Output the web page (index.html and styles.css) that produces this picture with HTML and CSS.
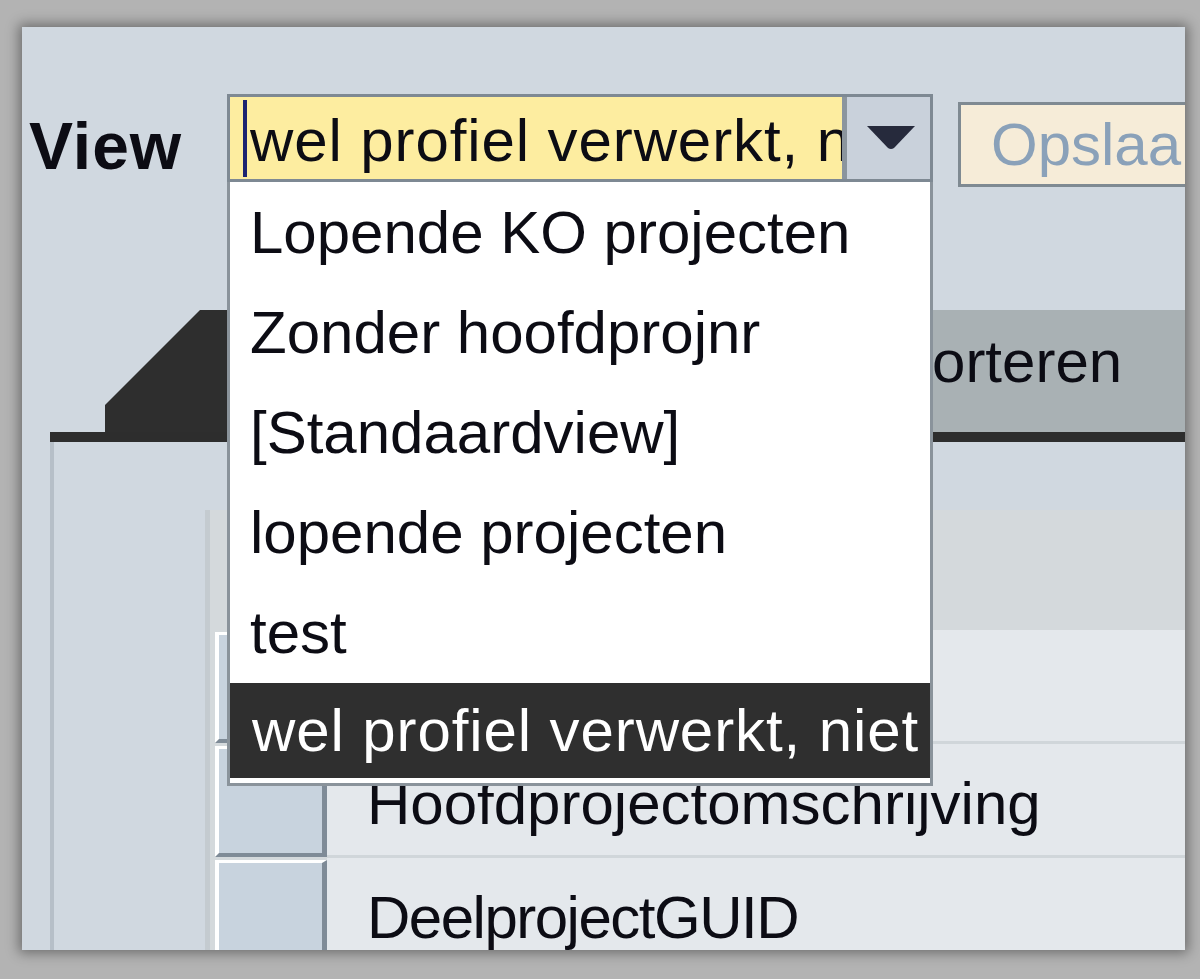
FILE: index.html
```html
<!DOCTYPE html>
<html lang="nl">
<head>
<meta charset="utf-8">
<title>View</title>
<link rel="stylesheet" href="styles.css">
</head>
<body>
<div class="panel">
  <div class="toolbar">
    <div class="label">View</div>
    <div class="select">
      <div class="select-field">
        <div class="caret"></div>
        <span class="select-text">wel profiel verwerkt, niet</span>
      </div>
      <div class="select-btn">
        <svg width="48" height="24" viewBox="0 0 48 24"><path d="M0 0 H48 L27 22 Q24 24 21 22 Z" fill="#262a3c"/></svg>
      </div>
    </div>
    <div class="save-btn">Opslaan</div>
  </div>

  <div class="tabs">
    <div class="tab-active"></div>
    <div class="tab">Sorteren</div>
  </div>

  <div class="content">
    <div class="grid">
      <div class="grid-head"></div>
      <div class="row">
        <div class="row-handle"></div>
        <div class="row-cell"></div>
      </div>
      <div class="row">
        <div class="row-handle"></div>
        <div class="row-cell">Hoofdprojectomschrijving</div>
      </div>
      <div class="row">
        <div class="row-handle"></div>
        <div class="row-cell row-cell-narrow">DeelprojectGUID</div>
      </div>
    </div>
  </div>

  <ul class="dropdown">
    <li class="option">Lopende KO projecten</li>
    <li class="option">Zonder hoofdprojnr</li>
    <li class="option">[Standaardview]</li>
    <li class="option">lopende projecten</li>
    <li class="option">test</li>
    <li class="option option-selected">wel profiel verwerkt, niet</li>
  </ul>
</div>
</body>
</html>
```

FILE: styles.css
```css
html, body {
  margin: 0;
  padding: 0;
}

body {
  background: #b3b3b3;
  width: 1200px;
  height: 979px;
  overflow: hidden;
  font-family: "Liberation Sans", Arial, sans-serif;
  color: #0c0c14;
}

.panel {
  position: relative;
  margin: 27px 0 0 22px;
  width: 1163px;
  height: 923px;
  background: #d0d8e0;
  box-shadow: 0 0 12px 3px rgba(0, 0, 0, 0.4);
  overflow: hidden;
}

/* toolbar */
.toolbar {
  display: flex;
  align-items: flex-start;
  padding-top: 67px;
}

.label {
  width: 205px;
  padding-left: 7px;
  padding-top: 8px;
  font-weight: bold;
  font-size: 66px;
  letter-spacing: 1px;
  line-height: 88px;
  height: 88px;
  box-sizing: border-box;
  flex-shrink: 0;
}

.select {
  display: flex;
  width: 706px;
  height: 88px;
  box-sizing: border-box;
  border: 3px solid #7e8993;
  flex-shrink: 0;
}

.select-field {
  flex: 1;
  display: flex;
  background: #fdeda0;
  overflow: hidden;
  white-space: nowrap;
}

.caret {
  width: 4px;
  margin: 3px 0 2px 13px;
  background: #1c2470;
  flex-shrink: 0;
}

.select-text {
  font-size: 60px;
  letter-spacing: 0.9px;
  line-height: 77px;
  padding-top: 5px;
  margin-left: 3px;
}

.select-btn {
  width: 88px;
  flex-shrink: 0;
  border-left: 5px solid #8b959e;
  background: #c9d1db;
  display: flex;
  align-items: center;
  justify-content: center;
  padding-left: 4px;
  box-sizing: border-box;
}

.save-btn {
  margin-left: 25px;
  margin-top: 8px;
  height: 85px;
  box-sizing: border-box;
  border: 3px solid #7f8a92;
  background: #f6ecd8;
  color: #8aa1b9;
  font-size: 60px;
  line-height: 79px;
  padding: 0 40px 0 30px;
  flex-shrink: 0;
  white-space: nowrap;
}

/* tabs */
.tabs {
  display: flex;
  margin: 123px 0 0 28px;
  height: 132px;
  box-sizing: border-box;
  border-bottom: 10px solid #2d2d2d;
}

.tab-active {
  margin-left: 55px;
  width: 600px;
  background: #2e2e2e;
  clip-path: polygon(0 95px, 95px 0, 100% 0, 100% 100%, 0 100%);
}

.tab {
  flex: 1;
  background: #a9b1b4;
  font-size: 60px;
  line-height: 104px;
  padding-left: 187px;
  white-space: nowrap;
}

/* content */
.content {
  margin-left: 28px;
  height: 508px;
  box-sizing: border-box;
  border-left: 4px solid #b6bfc8;
  padding: 68px 0 0 151px;
}

.grid {
  border-left: 5px solid #c4cbd0;
  background: #d4d9dc;
  height: 100%;
}

.grid-head {
  height: 120px;
}

.row {
  display: flex;
  height: 114px;
}

.row-handle {
  width: 112px;
  height: 111px;
  margin-left: 5px;
  margin-top: 2px;
  box-sizing: border-box;
  background: #c8d3de;
  border-left: 4px solid #ffffff;
  border-top: 3px solid #ffffff;
  border-right: 5px solid #7f8b97;
  border-bottom: 4px solid #7f8b97;
  flex-shrink: 0;
}

.row-cell {
  flex: 1;
  background: #e4e8ec;
  border-bottom: 3px solid #d0d6da;
  box-sizing: border-box;
  padding: 10px 0 0 40px;
  font-size: 60px;
  line-height: 100px;
  white-space: nowrap;
}

.row-cell-narrow {
  letter-spacing: -1.5px;
}

/* dropdown list overlay */
.dropdown {
  position: absolute;
  left: 205px;
  top: 155px;
  width: 706px;
  box-sizing: border-box;
  margin: 0;
  padding: 1px 0 5px;
  list-style: none;
  background: #ffffff;
  border: 3px solid #8a939b;
  border-top: 0;
  z-index: 5;
}

.option {
  height: 100px;
  line-height: 100px;
  font-size: 60px;
  padding-left: 20px;
  white-space: nowrap;
  overflow: hidden;
}

.option-selected {
  height: 95px;
  line-height: 95px;
  padding-left: 22px;
  letter-spacing: 0.9px;
  background: #2f2f2f;
  color: #ffffff;
}
```
